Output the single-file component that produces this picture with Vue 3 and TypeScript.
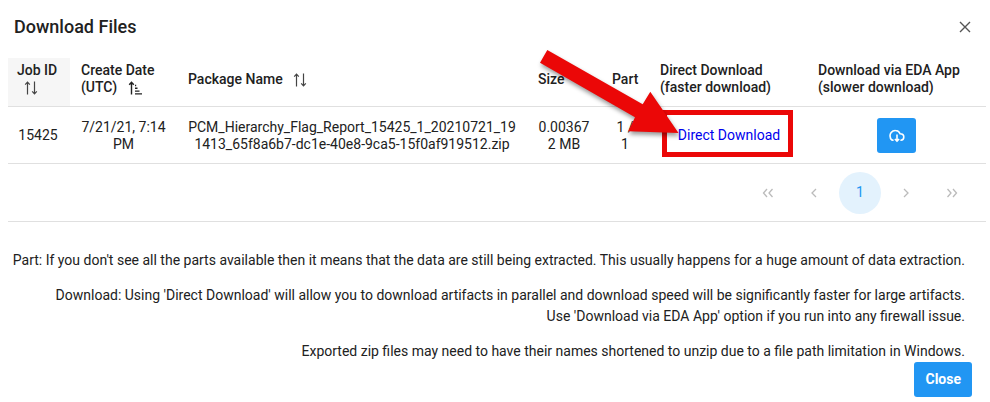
<script setup lang="ts">
interface Column {
  key: string
  lines: string[]
  sort?: 'none' | 'asc'
}

interface DownloadFile {
  jobId: number
  created: string
  name: string
  size: string
  part: string
}

const columns: Column[] = [
  { key: 'job', lines: ['Job ID'], sort: 'none' },
  { key: 'created', lines: ['Create Date', '(UTC)'], sort: 'asc' },
  { key: 'name', lines: ['Package Name'], sort: 'none' },
  { key: 'size', lines: ['Size'] },
  { key: 'part', lines: ['Part'] },
  { key: 'direct', lines: ['Direct Download', '(faster download)'] },
  { key: 'app', lines: ['Download via EDA App', '(slower download)'] },
]

const files: DownloadFile[] = [
  {
    jobId: 15425,
    created: '7/21/21, 7:14 PM',
    name: 'PCM_Hierarchy_Flag_Report_15425_1_20210721_191413_65f8a6b7-dc1e-40e8-9ca5-15f0af919512.zip',
    size: '0.003672 MB',
    part: '1 / 1',
  },
]
</script>

<template>
  <main class="dialog">
    <header class="dialog-header">
      <h1>Download Files</h1>
      <button class="dismiss" type="button" aria-label="Dismiss">
        <svg width="12" height="12" viewBox="0 0 12 12"><path d="M1 1l10 10M11 1L1 11" /></svg>
      </button>
    </header>

    <table>
      <colgroup>
        <col v-for="column in columns" :key="column.key" :class="'col-' + column.key" />
      </colgroup>
      <thead>
        <tr>
          <th v-for="column in columns" :key="column.key" :class="'head-' + column.key" scope="col">
            <template v-for="(line, i) in column.lines" :key="line"><br v-if="i > 0" />{{ line }}</template>{{ ' ' }}
            <svg v-if="column.sort === 'none'" class="sort" width="14" height="14" viewBox="0 0 14 14">
              <path d="M3.500 13.500V1.200M1.200 3.700l2.300-2.500 2.300 2.500M10.500 .5v12.300M8.200 10.300l2.300 2.500 2.300-2.500" />
            </svg>
            <svg v-else-if="column.sort === 'asc'" class="sort asc" width="14" height="14" viewBox="0 0 14 14">
              <path d="M3.500 13.500V1.200M1.200 3.700l2.300-2.500 2.300 2.500M7 4.500h1.200M7 7.300h2.500M7 10.100h4.500M7 12.900h7" />
            </svg>
          </th>
        </tr>
      </thead>
      <tbody>
        <tr v-for="file in files" :key="file.name">
          <td>{{ file.jobId }}</td>
          <td>{{ file.created }}</td>
          <td class="breakable">{{ file.name }}</td>
          <td class="breakable">{{ file.size }}</td>
          <td>{{ file.part }}</td>
          <td class="direct">
            <a href="#download">Direct Download</a>
            <span class="highlight"></span>
            <svg class="pointer" width="150" height="95" viewBox="0 0 150 95">
              <polygon points="17.300,5 10,17.700 105,72.300 98.300,86.300 148.500,88 120.300,46.700 112.700,59.300" />
            </svg>
          </td>
          <td class="app">
            <button class="primary icon-button" type="button" aria-label="Download via EDA App">
              <svg width="16" height="14" viewBox="0 0 16 14">
                <path d="M4.600 11.300H4A3.300 3.300 0 0 1 1.300 8.200 5.200 5.200 0 0 1 6.500 1.500c2.300 0 3.900 1.300 4.600 3.300 2.200 0 3.700 1.400 3.700 3.300 0 1.800-1.200 3.200-3 3.200h-.4M8 5.500v6.500M5.900 10L8 12.100l2.100-2.100" />
              </svg>
            </button>
          </td>
        </tr>
      </tbody>
    </table>

    <nav class="paginator" aria-label="Pages">
      <button type="button" disabled aria-label="First page">
        <svg width="12" height="10" viewBox="0 0 12 10"><path d="M5 1L1.500 5 5 9M10.500 1L7 5l3.500 4" /></svg>
      </button>
      <button type="button" disabled aria-label="Previous page">
        <svg width="12" height="10" viewBox="0 0 12 10"><path d="M8 1L4 5l4 4" /></svg>
      </button>
      <button class="current" type="button" aria-current="page">1</button>
      <button type="button" disabled aria-label="Next page">
        <svg width="12" height="10" viewBox="0 0 12 10"><path d="M4 1l4 4-4 4" /></svg>
      </button>
      <button type="button" disabled aria-label="Last page">
        <svg width="12" height="10" viewBox="0 0 12 10"><path d="M1.500 1L5 5 1.500 9M7 1l3.500 4L7 9" /></svg>
      </button>
    </nav>

    <section class="notes">
      <p>Part: If you don't see all the parts available then it means that the data are still being extracted. This usually happens for a huge amount of data extraction.</p>
      <p>
        Download: Using 'Direct Download' will allow you to download artifacts in parallel and download speed will be significantly faster for large artifacts.<br />
        Use 'Download via EDA App' option if you run into any firewall issue.
      </p>
      <p>Exported zip files may need to have their names shortened to unzip due to a file path limitation in Windows.</p>
    </section>

    <footer>
      <button class="primary" type="button">Close</button>
    </footer>
  </main>
</template>

<style>
body {
  background: #fff;
}
</style>

<style scoped>
.dialog {
  box-sizing: border-box;
  padding: 0 4px 4px 8px;
  color: #212121;
  font-family: Roboto, "Liberation Sans", sans-serif;
  font-size: 14px;
  line-height: 17px;
}

button {
  display: inline-flex;
  align-items: center;
  justify-content: center;
  margin: 0;
  padding: 0;
  border: 0;
  background: none;
  color: inherit;
  font: inherit;
}

svg {
  fill: none;
  stroke: currentColor;
}

.dialog-header {
  display: flex;
  align-items: center;
  justify-content: space-between;
  height: 54px;
  padding: 0 9px 4px 6px;
}

h1 {
  margin: 0;
  font-size: 18px;
  font-weight: 500;
  line-height: 24px;
}

.dismiss {
  width: 24px;
  height: 24px;
  color: #555;
  stroke-width: 1.400;
}

table {
  width: 100%;
  table-layout: fixed;
  border-collapse: separate;
  border-spacing: 0;
}

.col-job { width: 64px; }
.col-created { width: 107px; }
.col-size { width: 74px; }
.col-part { width: 48px; }
.col-direct { width: 158px; }
.col-app { width: 177px; }

th,
td {
  border-bottom: 1px solid #e0e0e0;
  vertical-align: middle;
}

th {
  padding: 4px 4px 10px 9px;
  font-weight: 500;
  text-align: left;
}

.head-job {
  background: linear-gradient(#f6f6f6, #f6f6f6) no-repeat 0 0 / calc(100% - 2px) 100%;
}

.sort {
  margin-left: 7px;
  vertical-align: -3px;
  color: #444;
  stroke-width: 1.200;
}

.asc {
  color: #222;
  stroke-width: 1.400;
}

td {
  padding: 11px 13px 10px 9px;
  text-align: center;
}

.breakable {
  word-break: break-all;
}

.direct {
  position: relative;
}

.direct,
.app {
  padding-right: 11px;
}

.direct a {
  color: #00e;
  text-decoration: none;
}

.highlight {
  position: absolute;
  top: 3px;
  left: 11px;
  box-sizing: border-box;
  width: 131px;
  height: 47px;
  border: 5px solid #eb0707;
}

.pointer {
  position: absolute;
  top: -62px;
  left: -121px;
  overflow: visible;
  fill: #eb0707;
  stroke: none;
  filter: drop-shadow(1px 3px 2px rgba(0, 0, 0, 0.4));
  pointer-events: none;
}

.primary {
  height: 35px;
  padding: 0 11px;
  border-radius: 3px;
  background: #2196f3;
  color: #fff;
  font-weight: 700;
}

.icon-button {
  width: 39px;
  padding: 0;
  vertical-align: top;
  stroke-width: 1.600;
}

.paginator {
  display: flex;
  align-items: center;
  justify-content: flex-end;
  gap: 4px;
  height: 57px;
  padding-right: 13px;
  border-bottom: 1px solid #e0e0e0;
}

.paginator button {
  width: 42px;
  height: 42px;
  border-radius: 50%;
  color: #bbb;
  stroke-width: 1.300;
}

.paginator .current {
  background: #e3f2fd;
  color: #2196f3;
}

.notes {
  display: flex;
  flex-direction: column;
  gap: 14px;
  padding: 28px 21px 0 0;
  line-height: 21px;
  text-align: right;
}

.notes p {
  margin: 0;
}

footer {
  display: flex;
  justify-content: flex-end;
  padding-right: 14px;
}
</style>
